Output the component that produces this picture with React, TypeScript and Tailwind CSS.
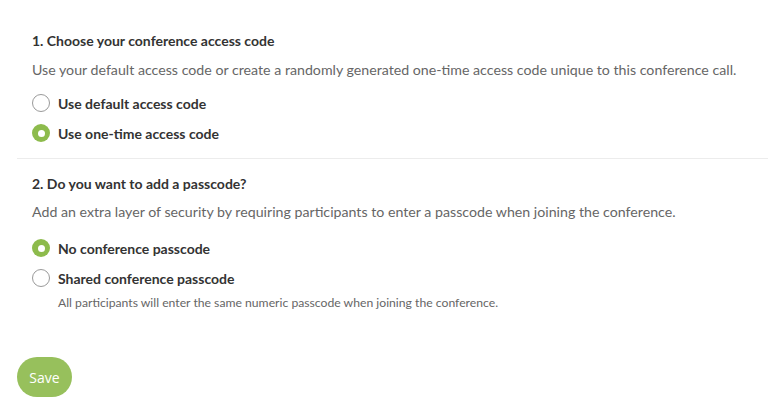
import React, { useState } from 'react';

function Radio({ checked, label, onClick }: { checked: boolean; label: string; onClick: () => void }) {
  return (
    <button type="button" onClick={onClick} className="flex items-center gap-[8px] h-[30px] text-left">
      {checked ? (
        <span className="w-[18px] h-[18px] rounded-full bg-[#8dbb4c] flex items-center justify-center">
          <span className="w-[7px] h-[7px] rounded-full bg-white" />
        </span>
      ) : (
        <span className="w-[18px] h-[18px] rounded-full border border-[#9a9a9a] bg-white" />
      )}
      <span className="text-[14px] font-bold text-[#333333]">{label}</span>
    </button>
  );
}

export default function App() {
  const [code, setCode] = useState('onetime');
  const [pass, setPass] = useState('none');

  return (
    <div className="w-[768px] h-[419px] bg-white overflow-hidden font-['Lato',sans-serif]">
      {/* Section 1 */}
      <div className="pl-[32px] pt-[31px]">
        <h2 className="text-[14px] font-bold text-[#333333] leading-[20px]">1. Choose your conference access code</h2>
        <p className="mt-[9px] text-[14.2px] text-[#666666] leading-[20px]">
          Use your default access code or create a randomly generated one-time access code unique to this conference call.
        </p>
        <div className="mt-[8px] flex flex-col">
          <Radio checked={code === 'default'} label="Use default access code" onClick={() => setCode('default')} />
          <Radio checked={code === 'onetime'} label="Use one-time access code" onClick={() => setCode('onetime')} />
        </div>
      </div>

      <div className="ml-[17px] mt-[10px] border-t border-[#ececec]" />

      {/* Section 2 */}
      <div className="pl-[32px] pt-[15px]">
        <h2 className="text-[14px] font-bold text-[#333333] leading-[20px]">2. Do you want to add a passcode?</h2>
        <p className="mt-[8px] text-[14.2px] text-[#666666] leading-[20px]">
          Add an extra layer of security by requiring participants to enter a passcode when joining the conference.
        </p>
        <div className="mt-[11px] flex flex-col">
          <Radio checked={pass === 'none'} label="No conference passcode" onClick={() => setPass('none')} />
          <Radio checked={pass === 'shared'} label="Shared conference passcode" onClick={() => setPass('shared')} />
          <p className="pl-[26px] text-[12.2px] text-[#666666] leading-[16px] mt-[2px]">
            All participants will enter the same numeric passcode when joining the conference.
          </p>
        </div>
      </div>

      <button
        type="button"
        className="ml-[17px] mt-[46px] w-[55px] h-[40px] rounded-full bg-[#97c05c] text-white text-[14px] font-['Open_Sans',sans-serif]"
      >
        Save
      </button>
    </div>
  );
}
